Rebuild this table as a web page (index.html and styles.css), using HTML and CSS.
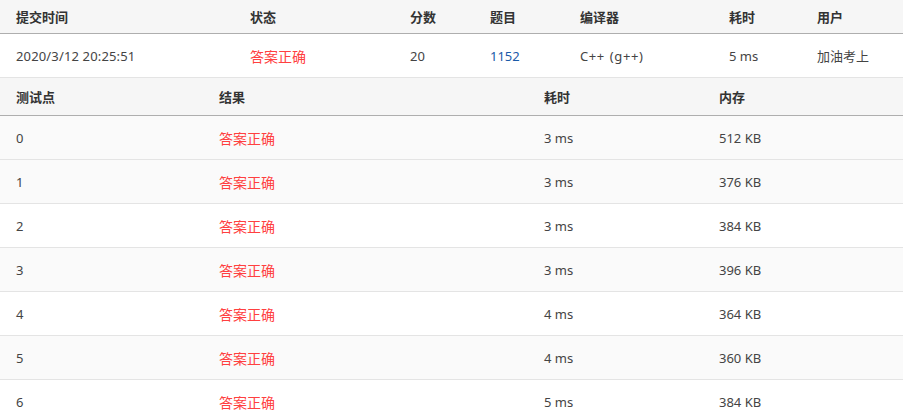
FILE: index.html
```html
<!DOCTYPE html>
<html lang="zh-CN">
<head>
<meta charset="utf-8">
<title>提交详情</title>
<link rel="stylesheet" href="styles.css">
</head>
<body>
<table class="grid summary">
  <colgroup>
    <col class="c1"><col class="c2"><col class="c3"><col class="c4"><col class="c5"><col class="c6"><col class="c7">
  </colgroup>
  <thead>
    <tr><th>提交时间</th><th>状态</th><th>分数</th><th>题目</th><th>编译器</th><th>耗时</th><th>用户</th></tr>
  </thead>
  <tbody>
    <tr><td class="wide">2020/3/12 20:25:51</td><td class="ok">答案正确</td><td>20</td><td><a class="link" href="#">1152</a></td><td class="comp">C++ (g++)</td><td>5 ms</td><td>加油考上</td></tr>
  </tbody>
</table>
<table class="grid cases">
  <colgroup>
    <col class="d1"><col class="d2"><col class="d3"><col class="d4">
  </colgroup>
  <thead>
    <tr><th>测试点</th><th>结果</th><th>耗时</th><th>内存</th></tr>
  </thead>
  <tbody>
    <tr class="alt"><td>0</td><td class="ok">答案正确</td><td>3 ms</td><td>512 KB</td></tr>
    <tr class="alt"><td>1</td><td class="ok">答案正确</td><td>3 ms</td><td>376 KB</td></tr>
    <tr><td>2</td><td class="ok">答案正确</td><td>3 ms</td><td>384 KB</td></tr>
    <tr class="alt"><td>3</td><td class="ok">答案正确</td><td>3 ms</td><td>396 KB</td></tr>
    <tr><td>4</td><td class="ok">答案正确</td><td>4 ms</td><td>364 KB</td></tr>
    <tr class="alt"><td>5</td><td class="ok">答案正确</td><td>4 ms</td><td>360 KB</td></tr>
    <tr><td>6</td><td class="ok">答案正确</td><td>5 ms</td><td>384 KB</td></tr>
  </tbody>
</table>
</body>
</html>
```
FILE: styles.css
```css
html, body {
  margin: 0;
  padding: 0;
  background: #fff;
}
body {
  font-family: "Noto Sans", "Noto Sans CJK SC", sans-serif;
  font-size: 13px;
  color: #333;
}
.grid {
  width: 903px;
  border-collapse: collapse;
  table-layout: fixed;
}
.grid th {
  text-align: left;
  font-weight: bold;
  color: #333;
  background: #f6f6f6;
  padding: 0 0 0 16px;
  height: 33px;
  border-bottom: 1px solid #aeaeae;
}
.grid td {
  text-align: left;
  padding: 0 0 0 16px;
  border-bottom: 1px solid #e4e4e4;
  color: #444;
  white-space: nowrap;
}
.summary td { height: 43px; }
.cases th { height: 37px; }
.cases td { height: 43px; }
.cases tr.alt td { background: #fafafa; }
.cases tbody tr:last-child td { border-bottom: none; }
.c1 { width: 234px; }
.c2 { width: 160px; }
.c3 { width: 80px; }
.c4 { width: 90px; }
.c5 { width: 149px; }
.c6 { width: 88px; }
.c7 { width: 102px; }
.d1 { width: 203px; }
.d2 { width: 325px; }
.d3 { width: 175px; }
.d4 { width: 200px; }
.grid td.ok { color: #ff4040; font-size: 14px; }
.grid td.wide { letter-spacing: 0.15px; }
.grid td.comp { word-spacing: 1px; letter-spacing: 0.6px; }
.link { color: #1a5aa8; text-decoration: none; }
```
